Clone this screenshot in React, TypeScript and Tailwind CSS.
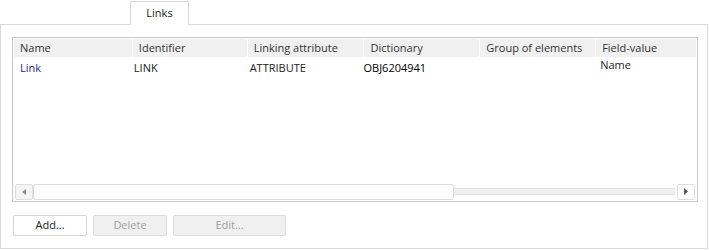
import React from "react";

const cols = [
  { w: 118, label: "Name" },
  { w: 115, label: "Identifier" },
  { w: 117, label: "Linking attribute" },
  { w: 116, label: "Dictionary" },
  { w: 116, label: "Group of elements" },
  { w: 101, label: "Field-value" },
];

export default function App() {
  return (
    <div
      className="w-[709px] h-[250px] bg-white text-[11px] text-[#333]"
      style={{ fontFamily: "'Open Sans', 'DejaVu Sans', sans-serif" }}
    >
      <div className="flex pt-[1px] pl-[130px]">
        <div className="relative z-10 -mb-[1px] w-[59px] h-[24px] border border-b-0 border-[#d9d9d9] bg-white flex items-center justify-center text-[#222]">
          Links
        </div>
      </div>
      <div className="w-[708px] h-[225px] border border-[#d9d9d9] pl-[11px] pt-[12px]">
        <div className="w-[686px] h-[165px] border border-[#c8c8c8] flex flex-col p-[1px] pb-0">
          <div className="flex h-[18px] bg-[#f0f0f0] text-[#333]">
            {cols.map((c, i) => (
              <div
                key={c.label}
                className={`flex items-center pl-[6px] ${i > 0 ? "border-l border-white" : ""}`}
                style={{ width: c.w }}
              >
                {c.label}
              </div>
            ))}
          </div>
          <div className="flex h-[23px] leading-[15px]">
            <div className="w-[118px] pl-[6px] pt-[3px] text-[#1d2c8c]">Link</div>
            <div className="w-[115px] pl-[2px] pt-[3px] text-[#222]">LINK</div>
            <div className="w-[117px] pl-[3px] pt-[3px] text-[#222]">ATTRIBUTE</div>
            <div className="w-[116px] pl-0 pt-[3px] text-black font-medium">OBJ6204941</div>
            <div className="w-[116px]"></div>
            <div className="w-[101px] pl-[5px] pt-0 text-[#222]">Name</div>
          </div>
          <div className="flex-1"></div>
          <div className="flex items-center h-[17px] mb-[1px] pl-[1px] pr-[1px]">
            <div className="w-[18px] h-[16px] border border-[#dcdcdc] rounded-[2px] bg-[#f4f4f4] flex items-center justify-center">
              <svg width="4" height="6" viewBox="0 0 4 6">
                <path d="M4 0 L0 3 L4 6 Z" fill="#888" />
              </svg>
            </div>
            <div className="w-[421px] h-[16px] border border-[#dcdcdc] rounded-[3px] bg-white"></div>
            <div className="flex-1 h-[7px] bg-[#efefef] border-y border-[#dedede]"></div>
            <div className="w-[18px] h-[16px] ml-[2px] border border-[#dcdcdc] rounded-[2px] bg-white flex items-center justify-center">
              <svg width="4" height="7" viewBox="0 0 4 7">
                <path d="M0 0 L4 3.5 L0 7 Z" fill="#555" />
              </svg>
            </div>
          </div>
        </div>
        <div className="flex gap-[6px] mt-[13px] pl-[1px]">
          <div className="w-[74px] h-[21px] border border-[#d4d4d4] rounded-[2px] bg-white flex items-center justify-center text-[#222]">
            Add...
          </div>
          <div className="w-[74px] h-[21px] border border-[#dcdcdc] rounded-[2px] bg-[#f0f0f0] flex items-center justify-center text-[#a0a0a0]">
            Delete
          </div>
          <div className="w-[113px] h-[21px] border border-[#dcdcdc] rounded-[2px] bg-[#f0f0f0] flex items-center justify-center text-[#a0a0a0]">
            Edit...
          </div>
        </div>
      </div>
    </div>
  );
}
